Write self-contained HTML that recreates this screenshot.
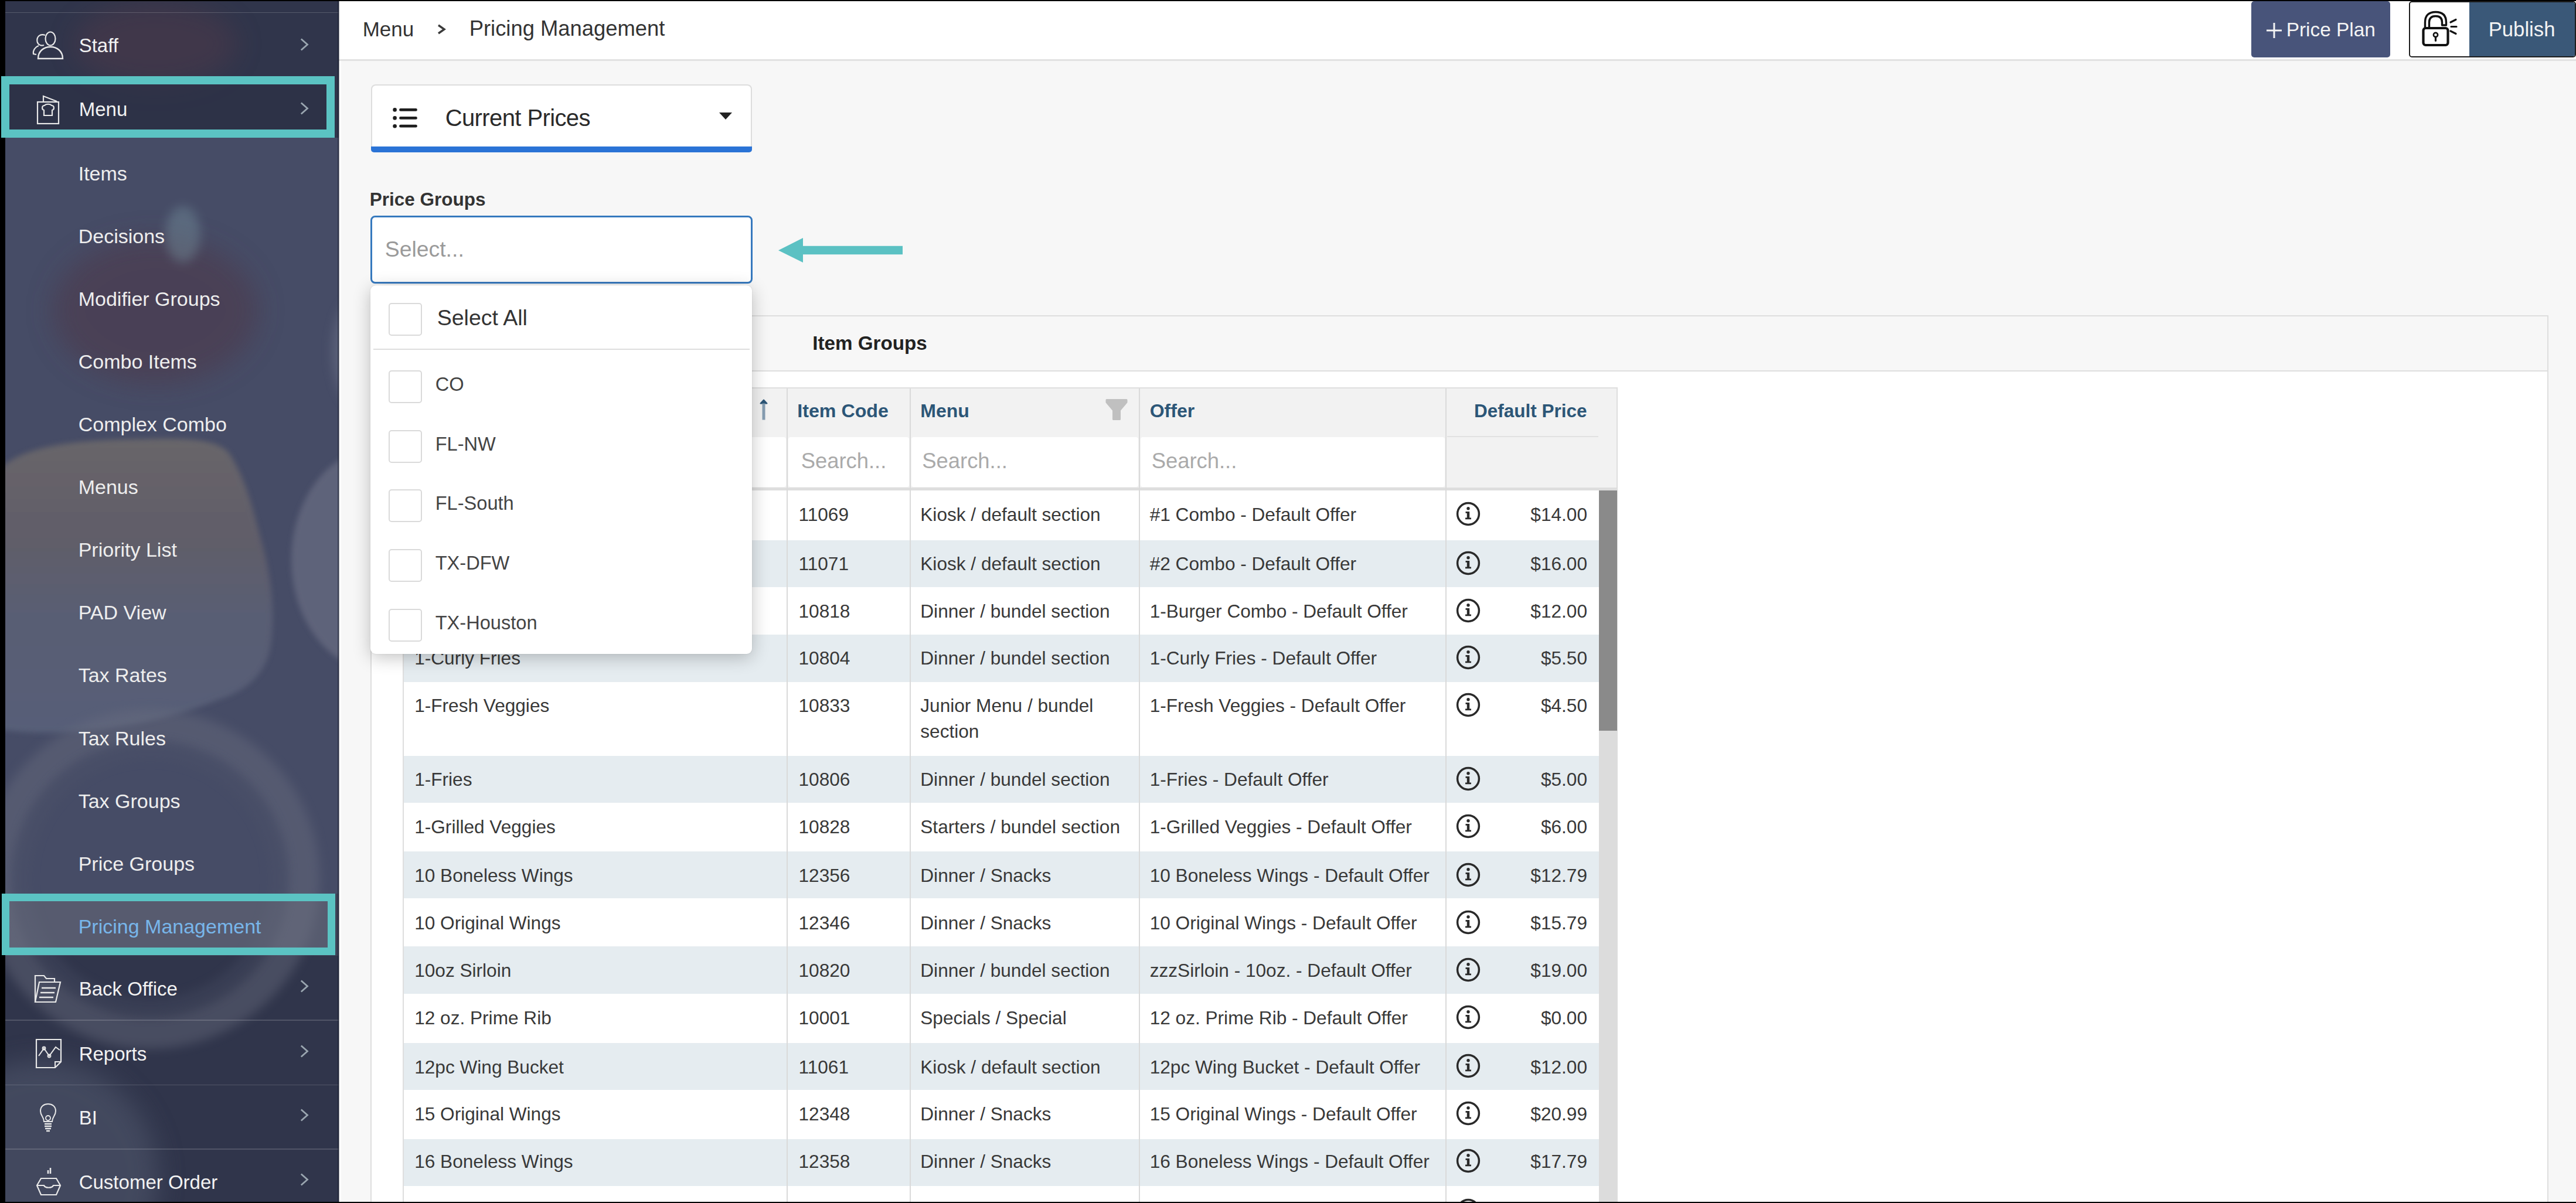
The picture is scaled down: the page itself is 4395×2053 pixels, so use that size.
<!DOCTYPE html>
<html><head><meta charset="utf-8"><title>Pricing Management</title>
<style>
html,body{margin:0;padding:0;overflow:hidden;}
body{width:4395px;height:2053px;position:relative;overflow:hidden;background:#f7f7f7;font-family:"Liberation Sans",sans-serif;}
.b{position:absolute;}
.t{position:absolute;white-space:nowrap;}
svg.b{overflow:visible;}
</style></head><body>
<div class="b" style="left:0.0px;top:0.0px;width:4395.0px;height:2.0px;background:#000"></div>
<div class="b" style="left:0.0px;top:0.0px;width:9.0px;height:2053.0px;background:#000"></div>
<div class="b" style="left:9.0px;top:2.0px;width:569.0px;height:2049.0px;background:#30354b;overflow:hidden"></div>
<div class="b" style="left:9.0px;top:235.0px;width:569.0px;height:1290.0px;background:#464c66"></div>
<div class="b" style="left:9.0px;top:1525.0px;width:569.0px;height:106.0px;background:#3e4358"></div>
<svg class="b" style="left:9px;top:2px;overflow:hidden" width="569" height="2049" viewBox="9 2 569 2049"><defs><filter id="bl1" x="-50%" y="-50%" width="200%" height="200%"><feGaussianBlur stdDeviation="22"/></filter><filter id="bl2" x="-50%" y="-50%" width="200%" height="200%"><feGaussianBlur stdDeviation="9"/></filter><filter id="bl3" x="-50%" y="-50%" width="200%" height="200%"><feGaussianBlur stdDeviation="35"/></filter><filter id="bl4" x="-20%" y="-20%" width="140%" height="140%"><feGaussianBlur stdDeviation="5"/></filter></defs><ellipse cx="265" cy="75" rx="140" ry="70" fill="#5a3a48" opacity="0.38" filter="url(#bl1)"/><ellipse cx="265" cy="530" rx="175" ry="125" fill="#4e3848" opacity="0.55" filter="url(#bl1)"/><ellipse cx="312" cy="400" rx="30" ry="48" fill="#7b9aa5" opacity="0.38" filter="url(#bl2)"/><ellipse cx="612" cy="600" rx="45" ry="95" fill="#70768c" opacity="0.5" filter="url(#bl2)"/><linearGradient id="bisc" x1="0" y1="0" x2="0" y2="1"><stop offset="0" stop-color="#6a676a"/><stop offset="0.35" stop-color="#625f6a"/><stop offset="0.6" stop-color="#5a5e74"/><stop offset="1" stop-color="#596079"/></linearGradient><path d="M0 800 C40 762 120 752 220 750 C300 748 370 745 392 775 C420 820 432 870 445 920 C462 980 470 1040 462 1100 C455 1150 420 1180 370 1195 C300 1225 200 1245 110 1250 C60 1252 20 1248 0 1245 Z" fill="url(#bisc)" opacity="0.95" filter="url(#bl4)"/><ellipse cx="645" cy="955" rx="148" ry="190" fill="#60657c" opacity="0.95" filter="url(#bl4)"/><circle cx="256" cy="1500" r="262" fill="none" stroke="#6a6e80" stroke-width="55" opacity="0.42" filter="url(#bl2)"/><circle cx="256" cy="1500" r="220" fill="none" stroke="#50556a" stroke-width="30" opacity="0.3" filter="url(#bl2)"/><circle cx="70" cy="2010" r="200" fill="#50566c" opacity="0.6" filter="url(#bl1)"/></svg>
<div class="b" style="left:9.0px;top:20.5px;width:569.0px;height:1.5px;background:rgba(255,255,255,0.18)"></div>
<svg class="b" style="left:54px;top:52px" width="56" height="52" viewBox="0 0 56 52"><ellipse cx="32" cy="14" rx="8.5" ry="11.5" fill="none" stroke="#e8e8e8" stroke-width="2.2"/><path d="M23 8 C15 5 8 10 9.5 19 C10.5 24 16 27 21 25" fill="none" stroke="#e8e8e8" stroke-width="2.2"/><path d="M12 26 C6 28 2 34 3 40 L8 41" fill="none" stroke="#e8e8e8" stroke-width="2.2"/><path d="M11 48 C11 36 20 28 32 28 C44 28 53 36 53 48 Z" fill="none" stroke="#e8e8e8" stroke-width="2.4"/></svg>
<div class="t" style="left:134.7px;top:60.5px;font-size:33px;line-height:33px;color:#f2f2f2;font-weight:normal;">Staff</div>
<svg class="b" style="left:510px;top:65.0px" width="20" height="22" viewBox="0 0 20 22"><path d="M3.8 1.5 L14.5 11 L3.8 20.5" fill="none" stroke="#9aa6b0" stroke-width="2.8"/></svg>
<div class="b" style="left:2.3px;top:130.4px;width:568.9px;height:104.4px;border:14px solid #5bc3c3;box-sizing:border-box;background:rgba(44,48,70,0.55)"></div>
<svg class="b" style="left:62px;top:162px" width="40" height="51" viewBox="0 0 40 51"><rect x="2" y="12" width="36" height="37" fill="none" stroke="#e8e8e8" stroke-width="2.2"/><path d="M12 12 L12 2 L35 11" fill="none" stroke="#e8e8e8" stroke-width="2.2"/><path d="M13 35 L13 26 C9 25 9 18 14 18 C16 15 24 15 26 18 C31 18 31 25 27 26 L27 35 Z" fill="none" stroke="#e8e8e8" stroke-width="2.2"/></svg>
<div class="t" style="left:134.7px;top:170.0px;font-size:33px;line-height:33px;color:#f2f2f2;font-weight:normal;">Menu</div>
<svg class="b" style="left:510px;top:173.5px" width="20" height="22" viewBox="0 0 20 22"><path d="M3.8 1.5 L14.5 11 L3.8 20.5" fill="none" stroke="#9aa6b0" stroke-width="2.8"/></svg>
<div class="t" style="left:133.7px;top:278.6px;font-size:34px;line-height:34px;color:#eeeeee;font-weight:normal;">Items</div>
<div class="t" style="left:133.7px;top:385.7px;font-size:34px;line-height:34px;color:#eeeeee;font-weight:normal;">Decisions</div>
<div class="t" style="left:133.7px;top:492.8px;font-size:34px;line-height:34px;color:#eeeeee;font-weight:normal;">Modifier Groups</div>
<div class="t" style="left:133.7px;top:599.9px;font-size:34px;line-height:34px;color:#eeeeee;font-weight:normal;">Combo Items</div>
<div class="t" style="left:133.7px;top:707.0px;font-size:34px;line-height:34px;color:#eeeeee;font-weight:normal;">Complex Combo</div>
<div class="t" style="left:133.7px;top:814.1px;font-size:34px;line-height:34px;color:#eeeeee;font-weight:normal;">Menus</div>
<div class="t" style="left:133.7px;top:921.2px;font-size:34px;line-height:34px;color:#eeeeee;font-weight:normal;">Priority List</div>
<div class="t" style="left:133.7px;top:1028.3px;font-size:34px;line-height:34px;color:#eeeeee;font-weight:normal;">PAD View</div>
<div class="t" style="left:133.7px;top:1135.4px;font-size:34px;line-height:34px;color:#eeeeee;font-weight:normal;">Tax Rates</div>
<div class="t" style="left:133.7px;top:1242.5px;font-size:34px;line-height:34px;color:#eeeeee;font-weight:normal;">Tax Rules</div>
<div class="t" style="left:133.7px;top:1349.6px;font-size:34px;line-height:34px;color:#eeeeee;font-weight:normal;">Tax Groups</div>
<div class="t" style="left:133.7px;top:1456.7px;font-size:34px;line-height:34px;color:#eeeeee;font-weight:normal;">Price Groups</div>
<div class="b" style="left:3.0px;top:1525.3px;width:568.6px;height:105.2px;border:13.5px solid #5bc3c3;box-sizing:border-box;background:rgba(112,116,134,0.5)"></div>
<div class="t" style="left:133.7px;top:1563.7px;font-size:34px;line-height:34px;color:#78b6ea;font-weight:normal;">Pricing Management</div>
<div class="b" style="left:9.0px;top:1740.3px;width:569.0px;height:1.4px;background:rgba(255,255,255,0.16)"></div>
<div class="b" style="left:9.0px;top:1850.8px;width:569.0px;height:1.4px;background:rgba(255,255,255,0.16)"></div>
<div class="b" style="left:9.0px;top:1960.3px;width:569.0px;height:1.4px;background:rgba(255,255,255,0.16)"></div>
<div class="t" style="left:134.7px;top:1670.5px;font-size:33px;line-height:33px;color:#f2f2f2;font-weight:normal;">Back Office</div>
<svg class="b" style="left:510px;top:1671.5px" width="20" height="22" viewBox="0 0 20 22"><path d="M3.8 1.5 L14.5 11 L3.8 20.5" fill="none" stroke="#9aa6b0" stroke-width="2.8"/></svg>
<div class="t" style="left:134.7px;top:1781.5px;font-size:33px;line-height:33px;color:#f2f2f2;font-weight:normal;">Reports</div>
<svg class="b" style="left:510px;top:1782.5px" width="20" height="22" viewBox="0 0 20 22"><path d="M3.8 1.5 L14.5 11 L3.8 20.5" fill="none" stroke="#9aa6b0" stroke-width="2.8"/></svg>
<div class="t" style="left:134.7px;top:1890.5px;font-size:33px;line-height:33px;color:#f2f2f2;font-weight:normal;">BI</div>
<svg class="b" style="left:510px;top:1891.5px" width="20" height="22" viewBox="0 0 20 22"><path d="M3.8 1.5 L14.5 11 L3.8 20.5" fill="none" stroke="#9aa6b0" stroke-width="2.8"/></svg>
<div class="t" style="left:134.7px;top:2000.5px;font-size:33px;line-height:33px;color:#f2f2f2;font-weight:normal;">Customer Order</div>
<svg class="b" style="left:510px;top:2001.5px" width="20" height="22" viewBox="0 0 20 22"><path d="M3.8 1.5 L14.5 11 L3.8 20.5" fill="none" stroke="#9aa6b0" stroke-width="2.8"/></svg>
<svg class="b" style="left:57px;top:1662px" width="48" height="52" viewBox="0 0 48 52"><path d="M3 48 L3 3 L18 3 L22 8 L36 8 L36 14" fill="none" stroke="#e8e8e8" stroke-width="2.2"/><path d="M3 48 L10 14 L46 14 L38 48 Z" fill="none" stroke="#e8e8e8" stroke-width="2.2"/><path d="M14 24 L38 24 M12 32 L36 32 M10 40 L34 40" stroke="#e8e8e8" stroke-width="2.6"/></svg>
<svg class="b" style="left:60px;top:1772px" width="46" height="52" viewBox="0 0 46 52"><path d="M2 2 L44 2 L44 40 L34 50 L2 50 Z" fill="none" stroke="#e8e8e8" stroke-width="2.2"/><path d="M34 50 L34 40 L44 40" fill="none" stroke="#e8e8e8" stroke-width="2"/><path d="M6 30 L15 17 L24 30 L35 15 L42 20" fill="none" stroke="#e8e8e8" stroke-width="2"/><circle cx="15" cy="17" r="2.5" fill="none" stroke="#e8e8e8" stroke-width="1.8"/><circle cx="24" cy="30" r="2.5" fill="none" stroke="#e8e8e8" stroke-width="1.8"/></svg>
<svg class="b" style="left:67px;top:1882px" width="30" height="52" viewBox="0 0 30 52"><path d="M8 32 C8 24 2 22 2 14 C2 6 8 2 15 2 C22 2 28 6 28 14 C28 22 22 24 22 32 Z" fill="none" stroke="#e8e8e8" stroke-width="2"/><circle cx="15" cy="26" r="4" fill="none" stroke="#e8e8e8" stroke-width="1.8"/><path d="M9 36 L21 36 M9 40 L21 40 M10 44 L20 44 M12 48 L18 48" stroke="#e8e8e8" stroke-width="2.4"/></svg>
<svg class="b" style="left:60px;top:1993px" width="46" height="50" viewBox="0 0 46 50"><path d="M22 10 L22 4 M26 10 L26 0" stroke="#e8e8e8" stroke-width="2.6"/><path d="M10 18 L36 18 L43 30 L36 46 L10 46 L3 30 Z" fill="none" stroke="#e8e8e8" stroke-width="2.2"/><path d="M3 30 L15 30 C17 35 29 35 31 30 L43 30" fill="none" stroke="#e8e8e8" stroke-width="2.2"/></svg>
<div class="b" style="left:578.0px;top:2.0px;width:3817.0px;height:99.0px;background:#ffffff"></div>
<div class="b" style="left:578.0px;top:101.0px;width:3817.0px;height:3.0px;background:#e2e2e2"></div>
<div class="b" style="left:581.5px;top:104.0px;width:3813.5px;height:1947.0px;background:#f7f7f7"></div>
<div class="b" style="left:578.0px;top:104.0px;width:3.5px;height:1947.0px;background:#ffffff"></div>
<div class="b" style="left:575.5px;top:2.0px;width:3.0px;height:2049.0px;background:rgba(20,24,40,0.45)"></div>
<div class="t" style="left:618.7px;top:32.4px;font-size:35px;line-height:35px;color:#333;font-weight:normal;">Menu</div>
<svg class="b" style="left:744px;top:36px" width="20" height="28" viewBox="0 0 20 28"><path d="M4 7 L14 14 L4 21" fill="none" stroke="#3a3a3a" stroke-width="3.4"/></svg>
<div class="t" style="left:800.7px;top:31.2px;font-size:36.4px;line-height:36.4px;color:#333;font-weight:normal;">Pricing Management</div>
<div class="b" style="left:3841.0px;top:2.0px;width:237.0px;height:96.0px;background:#48547a;border-radius:5px"></div>
<svg class="b" style="left:3866px;top:38px" width="28" height="28" viewBox="0 0 28 28"><path d="M14 1 L14 27 M1 14 L27 14" stroke="#f4f4f4" stroke-width="3"/></svg>
<div class="t" style="left:3900.7px;top:34.1px;font-size:33.4px;line-height:33.4px;color:#f4f4f4;font-weight:normal;">Price Plan</div>
<div class="b" style="left:4110.0px;top:2.0px;width:285.0px;height:96.0px;background:#ffffff;border:2px solid #1e1e1e;border-radius:5px;box-sizing:border-box"></div>
<div class="b" style="left:4213.0px;top:4.0px;width:180.0px;height:92.0px;background:#3a5878;border-radius:0 3px 3px 0"></div>
<svg class="b" style="left:4130px;top:18px" width="64" height="62" viewBox="0 0 64 62"><path d="M7.5 29 L7.5 20 C7.5 8 14 2.5 25.5 2.5 C37 2.5 43.5 8 43.5 20 L43.5 25 L36.5 25 L36.5 20 C36.5 13 33 9.5 25.5 9.5 C18 9.5 14.5 13 14.5 20 L14.5 29" fill="none" stroke="#111" stroke-width="3.4" stroke-linejoin="round"/><rect x="4.5" y="30" width="42" height="29" rx="4" fill="#fff" stroke="#111" stroke-width="4.2"/><circle cx="25.5" cy="41.5" r="3.6" fill="none" stroke="#111" stroke-width="2.6"/><path d="M25.5 45 L25.5 51.5" stroke="#111" stroke-width="3.2" stroke-linecap="round"/><path d="M51 20 L60 15.5 M52 27.5 L61 27.5 M51 35 L60 39.5" stroke="#111" stroke-width="3.2" stroke-linecap="round"/></svg>
<div class="t" style="left:4245.7px;top:33.0px;font-size:34.7px;line-height:34.7px;color:#f4f4f4;font-weight:normal;">Publish</div>
<div class="b" style="left:632.6px;top:144.0px;width:650.1px;height:116.0px;background:#fff;border:2px solid #dddddd;border-bottom:none;border-radius:8px 8px 5px 5px;box-sizing:border-box"></div>
<div class="b" style="left:632.6px;top:250.0px;width:650.1px;height:10.0px;background:#2a73d6;border-radius:0 0 5px 5px"></div>
<svg class="b" style="left:669px;top:184px" width="45" height="37" viewBox="0 0 45 37"><circle cx="4.6" cy="3.4" r="3.3" fill="#1e1e1e"/><circle cx="4.6" cy="17.4" r="3.3" fill="#1e1e1e"/><circle cx="4.6" cy="31.2" r="3.3" fill="#1e1e1e"/><path d="M14.5 3.4 L40.5 3.4 M14.5 17.4 L40.5 17.4 M14.5 31.2 L40.5 31.2" stroke="#1e1e1e" stroke-width="4.8" stroke-linecap="round"/></svg>
<div class="t" style="left:759.7px;top:181.1px;font-size:40px;line-height:40px;color:#2a2a2a;font-weight:normal;letter-spacing:-0.6px">Current Prices</div>
<svg class="b" style="left:1226px;top:190px" width="24" height="16" viewBox="0 0 24 16"><path d="M1 2 L23 2 L12 14 Z" fill="#222"/></svg>
<div class="t" style="left:630.7px;top:325.0px;font-size:31.5px;line-height:31.5px;color:#333;font-weight:bold;">Price Groups</div>
<div class="b" style="left:631.6px;top:368.0px;width:652.4px;height:115.5px;background:#fff;border:3px solid #3679be;border-radius:8px;box-sizing:border-box"></div>
<div class="t" style="left:656.7px;top:407.3px;font-size:37.4px;line-height:37.4px;color:#9a9a9a;font-weight:normal;">Select...</div>
<svg class="b" style="left:1320px;top:400px" width="230" height="56" viewBox="1320 400 230 56"><polygon points="1328,427.2 1370,406 1370,419.8 1540,419.8 1540,434.2 1370,434.2 1370,448" fill="#5bc1c3"/></svg>
<div class="b" style="left:632.0px;top:538.0px;width:3715.5px;height:1513.0px;background:#fff;border:2px solid #dedede;border-bottom:none;box-sizing:border-box"></div>
<div class="b" style="left:634.0px;top:540.0px;width:3711.5px;height:93.5px;background:#f7f7f7;border-bottom:2px solid #dedede;box-sizing:border-box"></div>
<div class="t" style="left:1386.2px;top:568.6px;font-size:33.2px;line-height:33.2px;color:#222;font-weight:bold;">Item Groups</div>
<div class="b" style="left:686.5px;top:660.5px;width:2073.5px;height:1390.5px;background:#fff;border:2px solid #dedede;border-bottom:none;box-sizing:border-box"></div>
<div class="b" style="left:688.5px;top:662.5px;width:2069.5px;height:82.0px;background:#f2f2f2"></div>
<div class="b" style="left:688.5px;top:744.5px;width:2069.5px;height:87.5px;background:#f2f2f2"></div>
<div class="b" style="left:1345.0px;top:746.0px;width:205.7px;height:85.0px;background:#fff;border-radius:4px"></div>
<div class="b" style="left:1554.7px;top:746.0px;width:387.5px;height:85.0px;background:#fff;border-radius:4px"></div>
<div class="b" style="left:1946.2px;top:746.0px;width:519.1px;height:85.0px;background:#fff;border-radius:4px"></div>
<div class="b" style="left:688.5px;top:746.0px;width:652.5px;height:85.0px;background:linear-gradient(90deg,#ececec,#fff 80px);border-radius:4px"></div>
<div class="b" style="left:2469.3px;top:743.5px;width:258.2px;height:2.0px;background:#e2e2e2"></div>
<div class="b" style="left:688.5px;top:832.0px;width:2069.5px;height:4.5px;background:#dedede"></div>
<div class="t" style="left:1360.3px;top:684.9px;font-size:32.2px;line-height:32.2px;color:#2c5677;font-weight:bold;">Item Code</div>
<div class="t" style="left:1570.3px;top:685.1px;font-size:32px;line-height:32px;color:#2c5677;font-weight:bold;">Menu</div>
<div class="t" style="left:1961.7px;top:685.1px;font-size:32px;line-height:32px;color:#2c5677;font-weight:bold;">Offer</div>
<div class="t" style="right:1687.5px;top:685.5px;font-size:31.5px;line-height:31.5px;color:#2c5677;font-weight:bold;">Default Price</div>
<svg class="b" style="left:1294px;top:680px" width="18" height="38" viewBox="0 0 18 38"><path d="M9 2.5 L14.5 8.5 L3.5 8.5 Z" fill="#2c5677" stroke="#2c5677" stroke-width="2" stroke-linejoin="round"/><rect x="6.5" y="8.5" width="5" height="28" fill="#869eb2"/></svg>
<svg class="b" style="left:1885px;top:680px" width="40" height="38" viewBox="0 0 40 38"><path d="M3 2.5 L37 2.5 L37 6.5 L25.5 20 L25.5 35.5 L14.5 35.5 L14.5 20 L3 6.5 Z" fill="#c0c0c0" stroke="#c0c0c0" stroke-width="3" stroke-linejoin="round"/></svg>
<div class="t" style="left:1366.7px;top:769.2px;font-size:36.4px;line-height:36.4px;color:#aaaaaa;font-weight:normal;">Search...</div>
<div class="t" style="left:1573.3px;top:769.2px;font-size:36.4px;line-height:36.4px;color:#aaaaaa;font-weight:normal;">Search...</div>
<div class="t" style="left:1964.7px;top:769.2px;font-size:36.4px;line-height:36.4px;color:#aaaaaa;font-weight:normal;">Search...</div>
<div class="b" style="left:688.5px;top:921.5px;width:2039.0px;height:80.0px;background:#e5ecf0"></div>
<div class="b" style="left:688.5px;top:1083.0px;width:2039.0px;height:81.0px;background:#e5ecf0"></div>
<div class="b" style="left:688.5px;top:1290.0px;width:2039.0px;height:80.0px;background:#e5ecf0"></div>
<div class="b" style="left:688.5px;top:1453.0px;width:2039.0px;height:80.0px;background:#e5ecf0"></div>
<div class="b" style="left:688.5px;top:1614.5px;width:2039.0px;height:81.5px;background:#e5ecf0"></div>
<div class="b" style="left:688.5px;top:1780.0px;width:2039.0px;height:80.0px;background:#e5ecf0"></div>
<div class="b" style="left:688.5px;top:1943.5px;width:2039.0px;height:80.0px;background:#e5ecf0"></div>
<div class="b" style="left:1342.0px;top:662.5px;width:2.0px;height:1388.5px;background:#dadada"></div>
<div class="b" style="left:1551.7px;top:662.5px;width:2.0px;height:1388.5px;background:#dadada"></div>
<div class="b" style="left:1943.2px;top:662.5px;width:2.0px;height:1388.5px;background:#dadada"></div>
<div class="b" style="left:2466.3px;top:662.5px;width:2.0px;height:1388.5px;background:#dadada"></div>
<div class="t" style="left:1362.5px;top:863.2px;font-size:31.6px;line-height:31.6px;color:#383838;font-weight:normal;">11069</div>
<div class="t" style="left:1570.3px;top:863.2px;font-size:31.6px;line-height:31.6px;color:#383838;font-weight:normal;">Kiosk / default section</div>
<div class="t" style="left:1961.7px;top:863.2px;font-size:31.6px;line-height:31.6px;color:#383838;font-weight:normal;">#1 Combo - Default Offer</div>
<div class="t" style="right:1687.0px;top:863.2px;font-size:31.6px;line-height:31.6px;color:#383838;font-weight:normal;">$14.00</div>
<svg class="b" style="left:2484px;top:856.0px" width="42" height="42" viewBox="0 0 42 42"><circle cx="21" cy="21" r="18.4" fill="none" stroke="#2a2a2a" stroke-width="3.5"/><circle cx="21" cy="11.8" r="2.7" fill="#2a2a2a"/><path d="M16.5 17 L23.2 17 L23.2 27.5 L26 27.5 L26 30.3 L16 30.3 L16 27.5 L18.8 27.5 L18.8 19.8 L16.5 19.8 Z" fill="#2a2a2a"/></svg>
<div class="t" style="left:1362.5px;top:946.7px;font-size:31.6px;line-height:31.6px;color:#383838;font-weight:normal;">11071</div>
<div class="t" style="left:1570.3px;top:946.7px;font-size:31.6px;line-height:31.6px;color:#383838;font-weight:normal;">Kiosk / default section</div>
<div class="t" style="left:1961.7px;top:946.7px;font-size:31.6px;line-height:31.6px;color:#383838;font-weight:normal;">#2 Combo - Default Offer</div>
<div class="t" style="right:1687.0px;top:946.7px;font-size:31.6px;line-height:31.6px;color:#383838;font-weight:normal;">$16.00</div>
<svg class="b" style="left:2484px;top:939.5px" width="42" height="42" viewBox="0 0 42 42"><circle cx="21" cy="21" r="18.4" fill="none" stroke="#2a2a2a" stroke-width="3.5"/><circle cx="21" cy="11.8" r="2.7" fill="#2a2a2a"/><path d="M16.5 17 L23.2 17 L23.2 27.5 L26 27.5 L26 30.3 L16 30.3 L16 27.5 L18.8 27.5 L18.8 19.8 L16.5 19.8 Z" fill="#2a2a2a"/></svg>
<div class="t" style="left:1362.5px;top:1027.7px;font-size:31.6px;line-height:31.6px;color:#383838;font-weight:normal;">10818</div>
<div class="t" style="left:1570.3px;top:1027.7px;font-size:31.6px;line-height:31.6px;color:#383838;font-weight:normal;">Dinner / bundel section</div>
<div class="t" style="left:1961.7px;top:1027.7px;font-size:31.6px;line-height:31.6px;color:#383838;font-weight:normal;">1-Burger Combo - Default Offer</div>
<div class="t" style="right:1687.0px;top:1027.7px;font-size:31.6px;line-height:31.6px;color:#383838;font-weight:normal;">$12.00</div>
<svg class="b" style="left:2484px;top:1020.5px" width="42" height="42" viewBox="0 0 42 42"><circle cx="21" cy="21" r="18.4" fill="none" stroke="#2a2a2a" stroke-width="3.5"/><circle cx="21" cy="11.8" r="2.7" fill="#2a2a2a"/><path d="M16.5 17 L23.2 17 L23.2 27.5 L26 27.5 L26 30.3 L16 30.3 L16 27.5 L18.8 27.5 L18.8 19.8 L16.5 19.8 Z" fill="#2a2a2a"/></svg>
<div class="t" style="left:707.2px;top:1108.4px;font-size:31.6px;line-height:31.6px;color:#383838;font-weight:normal;">1-Curly Fries</div>
<div class="t" style="left:1362.5px;top:1108.4px;font-size:31.6px;line-height:31.6px;color:#383838;font-weight:normal;">10804</div>
<div class="t" style="left:1570.3px;top:1108.4px;font-size:31.6px;line-height:31.6px;color:#383838;font-weight:normal;">Dinner / bundel section</div>
<div class="t" style="left:1961.7px;top:1108.4px;font-size:31.6px;line-height:31.6px;color:#383838;font-weight:normal;">1-Curly Fries - Default Offer</div>
<div class="t" style="right:1687.0px;top:1108.4px;font-size:31.6px;line-height:31.6px;color:#383838;font-weight:normal;">$5.50</div>
<svg class="b" style="left:2484px;top:1101.2px" width="42" height="42" viewBox="0 0 42 42"><circle cx="21" cy="21" r="18.4" fill="none" stroke="#2a2a2a" stroke-width="3.5"/><circle cx="21" cy="11.8" r="2.7" fill="#2a2a2a"/><path d="M16.5 17 L23.2 17 L23.2 27.5 L26 27.5 L26 30.3 L16 30.3 L16 27.5 L18.8 27.5 L18.8 19.8 L16.5 19.8 Z" fill="#2a2a2a"/></svg>
<div class="t" style="left:707.2px;top:1188.7px;font-size:31.6px;line-height:31.6px;color:#383838;font-weight:normal;">1-Fresh Veggies</div>
<div class="t" style="left:1362.5px;top:1188.7px;font-size:31.6px;line-height:31.6px;color:#383838;font-weight:normal;">10833</div>
<div class="t" style="left:1570.3px;top:1188.7px;font-size:31.6px;line-height:31.6px;color:#383838;font-weight:normal;">Junior Menu / bundel</div>
<div class="t" style="left:1570.3px;top:1233.3px;font-size:31.6px;line-height:31.6px;color:#383838;font-weight:normal;">section</div>
<div class="t" style="left:1961.7px;top:1188.7px;font-size:31.6px;line-height:31.6px;color:#383838;font-weight:normal;">1-Fresh Veggies - Default Offer</div>
<div class="t" style="right:1687.0px;top:1188.7px;font-size:31.6px;line-height:31.6px;color:#383838;font-weight:normal;">$4.50</div>
<svg class="b" style="left:2484px;top:1181.5px" width="42" height="42" viewBox="0 0 42 42"><circle cx="21" cy="21" r="18.4" fill="none" stroke="#2a2a2a" stroke-width="3.5"/><circle cx="21" cy="11.8" r="2.7" fill="#2a2a2a"/><path d="M16.5 17 L23.2 17 L23.2 27.5 L26 27.5 L26 30.3 L16 30.3 L16 27.5 L18.8 27.5 L18.8 19.8 L16.5 19.8 Z" fill="#2a2a2a"/></svg>
<div class="t" style="left:707.2px;top:1315.2px;font-size:31.6px;line-height:31.6px;color:#383838;font-weight:normal;">1-Fries</div>
<div class="t" style="left:1362.5px;top:1315.2px;font-size:31.6px;line-height:31.6px;color:#383838;font-weight:normal;">10806</div>
<div class="t" style="left:1570.3px;top:1315.2px;font-size:31.6px;line-height:31.6px;color:#383838;font-weight:normal;">Dinner / bundel section</div>
<div class="t" style="left:1961.7px;top:1315.2px;font-size:31.6px;line-height:31.6px;color:#383838;font-weight:normal;">1-Fries - Default Offer</div>
<div class="t" style="right:1687.0px;top:1315.2px;font-size:31.6px;line-height:31.6px;color:#383838;font-weight:normal;">$5.00</div>
<svg class="b" style="left:2484px;top:1308.0px" width="42" height="42" viewBox="0 0 42 42"><circle cx="21" cy="21" r="18.4" fill="none" stroke="#2a2a2a" stroke-width="3.5"/><circle cx="21" cy="11.8" r="2.7" fill="#2a2a2a"/><path d="M16.5 17 L23.2 17 L23.2 27.5 L26 27.5 L26 30.3 L16 30.3 L16 27.5 L18.8 27.5 L18.8 19.8 L16.5 19.8 Z" fill="#2a2a2a"/></svg>
<div class="t" style="left:707.2px;top:1395.8px;font-size:31.6px;line-height:31.6px;color:#383838;font-weight:normal;">1-Grilled Veggies</div>
<div class="t" style="left:1362.5px;top:1395.8px;font-size:31.6px;line-height:31.6px;color:#383838;font-weight:normal;">10828</div>
<div class="t" style="left:1570.3px;top:1395.8px;font-size:31.6px;line-height:31.6px;color:#383838;font-weight:normal;">Starters / bundel section</div>
<div class="t" style="left:1961.7px;top:1395.8px;font-size:31.6px;line-height:31.6px;color:#383838;font-weight:normal;">1-Grilled Veggies - Default Offer</div>
<div class="t" style="right:1687.0px;top:1395.8px;font-size:31.6px;line-height:31.6px;color:#383838;font-weight:normal;">$6.00</div>
<svg class="b" style="left:2484px;top:1388.6px" width="42" height="42" viewBox="0 0 42 42"><circle cx="21" cy="21" r="18.4" fill="none" stroke="#2a2a2a" stroke-width="3.5"/><circle cx="21" cy="11.8" r="2.7" fill="#2a2a2a"/><path d="M16.5 17 L23.2 17 L23.2 27.5 L26 27.5 L26 30.3 L16 30.3 L16 27.5 L18.8 27.5 L18.8 19.8 L16.5 19.8 Z" fill="#2a2a2a"/></svg>
<div class="t" style="left:707.2px;top:1478.7px;font-size:31.6px;line-height:31.6px;color:#383838;font-weight:normal;">10 Boneless Wings</div>
<div class="t" style="left:1362.5px;top:1478.7px;font-size:31.6px;line-height:31.6px;color:#383838;font-weight:normal;">12356</div>
<div class="t" style="left:1570.3px;top:1478.7px;font-size:31.6px;line-height:31.6px;color:#383838;font-weight:normal;">Dinner / Snacks</div>
<div class="t" style="left:1961.7px;top:1478.7px;font-size:31.6px;line-height:31.6px;color:#383838;font-weight:normal;">10 Boneless Wings - Default Offer</div>
<div class="t" style="right:1687.0px;top:1478.7px;font-size:31.6px;line-height:31.6px;color:#383838;font-weight:normal;">$12.79</div>
<svg class="b" style="left:2484px;top:1471.5px" width="42" height="42" viewBox="0 0 42 42"><circle cx="21" cy="21" r="18.4" fill="none" stroke="#2a2a2a" stroke-width="3.5"/><circle cx="21" cy="11.8" r="2.7" fill="#2a2a2a"/><path d="M16.5 17 L23.2 17 L23.2 27.5 L26 27.5 L26 30.3 L16 30.3 L16 27.5 L18.8 27.5 L18.8 19.8 L16.5 19.8 Z" fill="#2a2a2a"/></svg>
<div class="t" style="left:707.2px;top:1559.7px;font-size:31.6px;line-height:31.6px;color:#383838;font-weight:normal;">10 Original Wings</div>
<div class="t" style="left:1362.5px;top:1559.7px;font-size:31.6px;line-height:31.6px;color:#383838;font-weight:normal;">12346</div>
<div class="t" style="left:1570.3px;top:1559.7px;font-size:31.6px;line-height:31.6px;color:#383838;font-weight:normal;">Dinner / Snacks</div>
<div class="t" style="left:1961.7px;top:1559.7px;font-size:31.6px;line-height:31.6px;color:#383838;font-weight:normal;">10 Original Wings - Default Offer</div>
<div class="t" style="right:1687.0px;top:1559.7px;font-size:31.6px;line-height:31.6px;color:#383838;font-weight:normal;">$15.79</div>
<svg class="b" style="left:2484px;top:1552.5px" width="42" height="42" viewBox="0 0 42 42"><circle cx="21" cy="21" r="18.4" fill="none" stroke="#2a2a2a" stroke-width="3.5"/><circle cx="21" cy="11.8" r="2.7" fill="#2a2a2a"/><path d="M16.5 17 L23.2 17 L23.2 27.5 L26 27.5 L26 30.3 L16 30.3 L16 27.5 L18.8 27.5 L18.8 19.8 L16.5 19.8 Z" fill="#2a2a2a"/></svg>
<div class="t" style="left:707.2px;top:1641.0px;font-size:31.6px;line-height:31.6px;color:#383838;font-weight:normal;">10oz Sirloin</div>
<div class="t" style="left:1362.5px;top:1641.0px;font-size:31.6px;line-height:31.6px;color:#383838;font-weight:normal;">10820</div>
<div class="t" style="left:1570.3px;top:1641.0px;font-size:31.6px;line-height:31.6px;color:#383838;font-weight:normal;">Dinner / bundel section</div>
<div class="t" style="left:1961.7px;top:1641.0px;font-size:31.6px;line-height:31.6px;color:#383838;font-weight:normal;">zzzSirloin - 10oz. - Default Offer</div>
<div class="t" style="right:1687.0px;top:1641.0px;font-size:31.6px;line-height:31.6px;color:#383838;font-weight:normal;">$19.00</div>
<svg class="b" style="left:2484px;top:1633.8px" width="42" height="42" viewBox="0 0 42 42"><circle cx="21" cy="21" r="18.4" fill="none" stroke="#2a2a2a" stroke-width="3.5"/><circle cx="21" cy="11.8" r="2.7" fill="#2a2a2a"/><path d="M16.5 17 L23.2 17 L23.2 27.5 L26 27.5 L26 30.3 L16 30.3 L16 27.5 L18.8 27.5 L18.8 19.8 L16.5 19.8 Z" fill="#2a2a2a"/></svg>
<div class="t" style="left:707.2px;top:1721.7px;font-size:31.6px;line-height:31.6px;color:#383838;font-weight:normal;">12 oz. Prime Rib</div>
<div class="t" style="left:1362.5px;top:1721.7px;font-size:31.6px;line-height:31.6px;color:#383838;font-weight:normal;">10001</div>
<div class="t" style="left:1570.3px;top:1721.7px;font-size:31.6px;line-height:31.6px;color:#383838;font-weight:normal;">Specials / Special</div>
<div class="t" style="left:1961.7px;top:1721.7px;font-size:31.6px;line-height:31.6px;color:#383838;font-weight:normal;">12 oz. Prime Rib - Default Offer</div>
<div class="t" style="right:1687.0px;top:1721.7px;font-size:31.6px;line-height:31.6px;color:#383838;font-weight:normal;">$0.00</div>
<svg class="b" style="left:2484px;top:1714.5px" width="42" height="42" viewBox="0 0 42 42"><circle cx="21" cy="21" r="18.4" fill="none" stroke="#2a2a2a" stroke-width="3.5"/><circle cx="21" cy="11.8" r="2.7" fill="#2a2a2a"/><path d="M16.5 17 L23.2 17 L23.2 27.5 L26 27.5 L26 30.3 L16 30.3 L16 27.5 L18.8 27.5 L18.8 19.8 L16.5 19.8 Z" fill="#2a2a2a"/></svg>
<div class="t" style="left:707.2px;top:1805.5px;font-size:31.6px;line-height:31.6px;color:#383838;font-weight:normal;">12pc Wing Bucket</div>
<div class="t" style="left:1362.5px;top:1805.5px;font-size:31.6px;line-height:31.6px;color:#383838;font-weight:normal;">11061</div>
<div class="t" style="left:1570.3px;top:1805.5px;font-size:31.6px;line-height:31.6px;color:#383838;font-weight:normal;">Kiosk / default section</div>
<div class="t" style="left:1961.7px;top:1805.5px;font-size:31.6px;line-height:31.6px;color:#383838;font-weight:normal;">12pc Wing Bucket - Default Offer</div>
<div class="t" style="right:1687.0px;top:1805.5px;font-size:31.6px;line-height:31.6px;color:#383838;font-weight:normal;">$12.00</div>
<svg class="b" style="left:2484px;top:1798.3px" width="42" height="42" viewBox="0 0 42 42"><circle cx="21" cy="21" r="18.4" fill="none" stroke="#2a2a2a" stroke-width="3.5"/><circle cx="21" cy="11.8" r="2.7" fill="#2a2a2a"/><path d="M16.5 17 L23.2 17 L23.2 27.5 L26 27.5 L26 30.3 L16 30.3 L16 27.5 L18.8 27.5 L18.8 19.8 L16.5 19.8 Z" fill="#2a2a2a"/></svg>
<div class="t" style="left:707.2px;top:1886.0px;font-size:31.6px;line-height:31.6px;color:#383838;font-weight:normal;">15 Original Wings</div>
<div class="t" style="left:1362.5px;top:1886.0px;font-size:31.6px;line-height:31.6px;color:#383838;font-weight:normal;">12348</div>
<div class="t" style="left:1570.3px;top:1886.0px;font-size:31.6px;line-height:31.6px;color:#383838;font-weight:normal;">Dinner / Snacks</div>
<div class="t" style="left:1961.7px;top:1886.0px;font-size:31.6px;line-height:31.6px;color:#383838;font-weight:normal;">15 Original Wings - Default Offer</div>
<div class="t" style="right:1687.0px;top:1886.0px;font-size:31.6px;line-height:31.6px;color:#383838;font-weight:normal;">$20.99</div>
<svg class="b" style="left:2484px;top:1878.8px" width="42" height="42" viewBox="0 0 42 42"><circle cx="21" cy="21" r="18.4" fill="none" stroke="#2a2a2a" stroke-width="3.5"/><circle cx="21" cy="11.8" r="2.7" fill="#2a2a2a"/><path d="M16.5 17 L23.2 17 L23.2 27.5 L26 27.5 L26 30.3 L16 30.3 L16 27.5 L18.8 27.5 L18.8 19.8 L16.5 19.8 Z" fill="#2a2a2a"/></svg>
<div class="t" style="left:707.2px;top:1967.2px;font-size:31.6px;line-height:31.6px;color:#383838;font-weight:normal;">16 Boneless Wings</div>
<div class="t" style="left:1362.5px;top:1967.2px;font-size:31.6px;line-height:31.6px;color:#383838;font-weight:normal;">12358</div>
<div class="t" style="left:1570.3px;top:1967.2px;font-size:31.6px;line-height:31.6px;color:#383838;font-weight:normal;">Dinner / Snacks</div>
<div class="t" style="left:1961.7px;top:1967.2px;font-size:31.6px;line-height:31.6px;color:#383838;font-weight:normal;">16 Boneless Wings - Default Offer</div>
<div class="t" style="right:1687.0px;top:1967.2px;font-size:31.6px;line-height:31.6px;color:#383838;font-weight:normal;">$17.79</div>
<svg class="b" style="left:2484px;top:1960.0px" width="42" height="42" viewBox="0 0 42 42"><circle cx="21" cy="21" r="18.4" fill="none" stroke="#2a2a2a" stroke-width="3.5"/><circle cx="21" cy="11.8" r="2.7" fill="#2a2a2a"/><path d="M16.5 17 L23.2 17 L23.2 27.5 L26 27.5 L26 30.3 L16 30.3 L16 27.5 L18.8 27.5 L18.8 19.8 L16.5 19.8 Z" fill="#2a2a2a"/></svg>
<div class="t" style="left:707.2px;top:2051.7px;font-size:31.6px;line-height:31.6px;color:#383838;font-weight:normal;">16 Original Wings</div>
<div class="t" style="left:1362.5px;top:2051.7px;font-size:31.6px;line-height:31.6px;color:#383838;font-weight:normal;">12350</div>
<div class="t" style="left:1570.3px;top:2051.7px;font-size:31.6px;line-height:31.6px;color:#383838;font-weight:normal;">Dinner / Snacks</div>
<div class="t" style="left:1961.7px;top:2051.7px;font-size:31.6px;line-height:31.6px;color:#383838;font-weight:normal;">16 Original Wings - Default Offer</div>
<div class="t" style="right:1687.0px;top:2051.7px;font-size:31.6px;line-height:31.6px;color:#383838;font-weight:normal;">$21.99</div>
<svg class="b" style="left:2484px;top:2044.5px" width="42" height="42" viewBox="0 0 42 42"><circle cx="21" cy="21" r="18.4" fill="none" stroke="#2a2a2a" stroke-width="3.5"/><circle cx="21" cy="11.8" r="2.7" fill="#2a2a2a"/><path d="M16.5 17 L23.2 17 L23.2 27.5 L26 27.5 L26 30.3 L16 30.3 L16 27.5 L18.8 27.5 L18.8 19.8 L16.5 19.8 Z" fill="#2a2a2a"/></svg>
<div class="b" style="left:2727.5px;top:836.5px;width:31.0px;height:1214.5px;background:#dcdcdc"></div>
<div class="b" style="left:2727.5px;top:836.5px;width:31.1px;height:410.1px;background:#8a8a8a"></div>
<div class="b" style="left:632.0px;top:486.5px;width:650.5px;height:629.5px;background:#fff;border-radius:9px;box-shadow:0 6px 30px rgba(0,0,0,0.24), 0 0 2px rgba(0,0,0,0.14)"></div>
<div class="b" style="left:637.0px;top:594.8px;width:642.0px;height:2.0px;background:#dddddd"></div>
<div class="b" style="left:663.0px;top:516.6px;width:56.6px;height:56.0px;border:2px solid #dadada;border-radius:5px;box-sizing:border-box;background:#fff"></div>
<div class="b" style="left:663.0px;top:631.8px;width:56.6px;height:56.0px;border:2px solid #dadada;border-radius:5px;box-sizing:border-box;background:#fff"></div>
<div class="b" style="left:663.0px;top:733.8px;width:56.6px;height:56.0px;border:2px solid #dadada;border-radius:5px;box-sizing:border-box;background:#fff"></div>
<div class="b" style="left:663.0px;top:835.3px;width:56.6px;height:56.0px;border:2px solid #dadada;border-radius:5px;box-sizing:border-box;background:#fff"></div>
<div class="b" style="left:663.0px;top:937.4px;width:56.6px;height:56.0px;border:2px solid #dadada;border-radius:5px;box-sizing:border-box;background:#fff"></div>
<div class="b" style="left:663.0px;top:1038.8px;width:56.6px;height:56.0px;border:2px solid #dadada;border-radius:5px;box-sizing:border-box;background:#fff"></div>
<div class="t" style="left:745.7px;top:524.2px;font-size:37.5px;line-height:37.5px;color:#333;font-weight:normal;">Select All</div>
<div class="t" style="left:742.7px;top:639.9px;font-size:32.6px;line-height:32.6px;color:#444;font-weight:normal;">CO</div>
<div class="t" style="left:742.7px;top:741.6px;font-size:32.6px;line-height:32.6px;color:#444;font-weight:normal;">FL-NW</div>
<div class="t" style="left:742.7px;top:843.3px;font-size:32.6px;line-height:32.6px;color:#444;font-weight:normal;">FL-South</div>
<div class="t" style="left:742.7px;top:945.0px;font-size:32.6px;line-height:32.6px;color:#444;font-weight:normal;">TX-DFW</div>
<div class="t" style="left:742.7px;top:1046.7px;font-size:32.6px;line-height:32.6px;color:#444;font-weight:normal;">TX-Houston</div>
<div class="b" style="left:0.0px;top:2051.0px;width:4395.0px;height:2.0px;background:#000"></div>
</body></html>
